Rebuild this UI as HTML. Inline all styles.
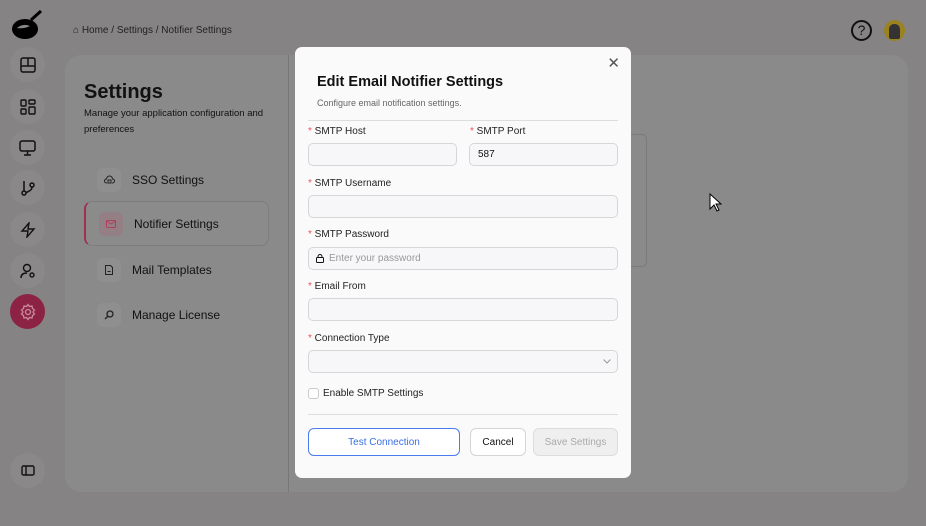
<!DOCTYPE html>
<html><head><meta charset="utf-8"><style>
*{box-sizing:border-box;margin:0;padding:0}
body{width:926px;height:526px;overflow:hidden;background:#858383;font-family:"Liberation Sans",sans-serif;position:relative;color:#111}
.abs{position:absolute}
.ic{position:absolute;left:10px;width:35px;height:35px;border-radius:50%;background:#8a8888;display:flex;align-items:center;justify-content:center}
.card{left:65px;top:55px;width:843px;height:437px;background:#898a89;border-radius:16px}
.nav{position:absolute;left:84px;width:185px;height:45px;display:flex;align-items:center;font-size:12px;color:#111}
.nav .b{width:24px;height:24px;border-radius:6px;background:#8f8f8f;margin:0 11px 0 13px;display:flex;align-items:center;justify-content:center}
.modal{left:295px;top:47px;width:336px;height:431px;background:#fafafa;border-radius:7px}
.lbl{position:absolute;font-size:10px;color:#222}
.lbl:before{content:"* ";color:#e55}
.in{position:absolute;height:23px;border:1px solid #d6d6d9;border-radius:5px;background:#f7f7f9;font-size:10px;padding-left:8px;line-height:21px}
.btn{position:absolute;height:28px;border-radius:6px;font-size:10px;display:flex;align-items:center;justify-content:center}
</style></head><body>
<svg class="abs" style="left:11px;top:9px" width="32" height="32" viewBox="0 0 32 32"><ellipse cx="14" cy="20" rx="13" ry="10" fill="#000"/><path d="M20 11 L30 2" stroke="#000" stroke-width="3"/><path d="M6 19 q6 -5 13 -2 q-6 3 -13 2z" fill="#888"/></svg>
<div class="ic" style="top:47px"><svg width="16" height="16" viewBox="0 0 16 16" fill="none" stroke="#111" stroke-width="1.5"><rect x="1" y="1" width="14" height="14" rx="2"/><path d="M1 9h14M8 1v8"/></svg></div>
<div class="ic" style="top:89px"><svg width="16" height="16" viewBox="0 0 16 16" fill="none" stroke="#111" stroke-width="1.4"><rect x="1" y="1" width="5" height="6" rx="1"/><rect x="9" y="1" width="6" height="4" rx="1"/><rect x="1" y="10" width="5" height="5" rx="1"/><rect x="9" y="8" width="6" height="7" rx="1"/></svg></div>
<div class="ic" style="top:130px"><svg width="17" height="16" viewBox="0 0 17 16" fill="none" stroke="#111" stroke-width="1.5"><rect x="1" y="1" width="15" height="10" rx="2"/><path d="M8.5 11v4M5 15h7"/></svg></div>
<div class="ic" style="top:170px"><svg width="16" height="16" viewBox="0 0 16 16" fill="none" stroke="#111" stroke-width="1.5"><circle cx="4" cy="13" r="2"/><circle cx="12" cy="5" r="2"/><path d="M4 1v10M12 7c0 4-4 4-6 6"/></svg></div>
<div class="ic" style="top:212px"><svg width="16" height="16" viewBox="0 0 16 16" fill="none" stroke="#111" stroke-width="1.4"><path d="M9 1L2 9h6l-1 6 7-8H8z"/></svg></div>
<div class="ic" style="top:253px"><svg width="16" height="16" viewBox="0 0 16 16" fill="none" stroke="#111" stroke-width="1.4"><circle cx="7" cy="5" r="3.5"/><path d="M1 15c0-4 3-5 6-5"/><circle cx="12" cy="12" r="2"/></svg></div>
<div class="ic" style="top:294px;background:#8c2244"><svg width="18" height="18" viewBox="0 0 18 18" fill="none" stroke="#c98c9c" stroke-width="1.3"><circle cx="9" cy="9" r="2.5"/><path d="M9 1.5l1.5 2 2.5-.5.5 2.5 2 1.5-1.5 2 1.5 2-2 1.5-.5 2.5-2.5-.5L9 16.5l-1.5-2-2.5.5-.5-2.5-2-1.5 1.5-2-1.5-2 2-1.5.5-2.5 2.5.5z"/></svg></div>
<div class="ic" style="top:453px"><svg width="14" height="11" viewBox="0 0 14 11" fill="none" stroke="#111" stroke-width="1.4"><rect x="1" y="1" width="12" height="9" rx="1.5"/><path d="M5 1v9"/></svg></div>
<div class="abs" style="left:73px;top:25px;font-size:10px;color:#222">⌂ Home / Settings / Notifier Settings</div>
<div class="abs" style="left:851px;top:20px;width:21px;height:21px;border:2px solid #111;border-radius:50%;font-size:14px;text-align:center;line-height:17px">?</div>
<div class="abs" style="left:884px;top:20px;width:21px;height:21px;border-radius:50%;background:#9a8220"><div style="margin:4px 0 0 5px;width:11px;height:15px;background:#333;border-radius:5px 5px 2px 2px"></div></div>
<div class="abs card"></div>
<div class="abs" style="left:288px;top:55px;width:1px;height:437px;background:#777"></div>
<div class="abs" style="left:620px;top:134px;width:27px;height:133px;border:1px solid #7a7a7a;border-left:none;border-radius:0 5px 5px 0"></div>
<div class="abs" style="left:84px;top:81px;font-size:20px;font-weight:bold;color:#111">Settings</div>
<div class="abs" style="left:84px;top:106px;font-size:9.5px;line-height:16px;width:195px;color:#111">Manage your application configuration and preferences</div>
<div class="nav" style="top:157px"><div class="b"><svg width="11" height="10" viewBox="0 0 11 10" fill="none" stroke="#222"><path d="M3 8H2.5a2 2 0 0 1 0-4 3 3 0 0 1 6 0 2 2 0 0 1 0 4H8"/><rect x="4" y="5" width="3" height="3"/></svg></div>SSO Settings</div>
<div class="nav" style="top:201px;border:1px solid #7d7d7d;border-left:2px solid #a03050;border-radius:8px;background:#8a8b8a"><div class="b" style="background:#937f84"><svg width="10" height="8" viewBox="0 0 10 8" fill="none" stroke="#b04060"><rect x=".5" y=".5" width="9" height="7" rx="1"/><path d="M.5 1l4.5 3 4.5-3"/></svg></div>Notifier Settings</div>
<div class="nav" style="top:247px"><div class="b"><svg width="8" height="10" viewBox="0 0 8 10" fill="none" stroke="#222"><path d="M.5.5h5l2 2v7h-7z M2.5 6.5h3"/></svg></div>Mail Templates</div>
<div class="nav" style="top:292px"><div class="b"><svg width="10" height="10" viewBox="0 0 10 10" fill="none" stroke="#222" stroke-width="1.3"><circle cx="6" cy="4" r="3"/><path d="M4 6L1 9"/></svg></div>Manage License</div>
<svg class="abs" style="left:709px;top:193px" width="13" height="20" viewBox="0 0 13 20"><path d="M1 1v15l4-4 3 6 2-1-3-6h5z" fill="#fff" stroke="#000"/></svg>
<div class="abs modal">
<div class="abs" style="right:11px;top:7px;font-size:15px;color:#555">✕</div>
<div class="abs" style="left:22px;top:27px;font-size:14.5px;font-weight:bold;color:#111">Edit Email Notifier Settings</div>
<div class="abs" style="left:22px;top:51px;font-size:9px;color:#666">Configure email notification settings.</div>
<div class="abs" style="left:13px;top:73px;width:310px;height:1px;background:#ddd"></div>
<div class="lbl" style="left:13px;top:79px">SMTP Host</div>
<div class="lbl" style="left:175px;top:79px">SMTP Port</div>
<div class="in" style="left:13px;top:96px;width:149px"></div>
<div class="in" style="left:174px;top:96px;width:149px">587</div>
<div class="lbl" style="left:13px;top:131px">SMTP Username</div>
<div class="in" style="left:13px;top:148px;width:310px"></div>
<div class="lbl" style="left:13px;top:182px">SMTP Password</div>
<div class="in" style="left:13px;top:200px;width:310px;color:#999;padding-left:20px"><svg style="position:absolute;left:7px;top:6px" width="8" height="9" viewBox="0 0 8 9" fill="none" stroke="#111"><rect x=".5" y="3.5" width="7" height="5" rx="1"/><path d="M2 3.5V2.5a2 2 0 0 1 4 0v1"/></svg>Enter your password</div>
<div class="lbl" style="left:13px;top:234px">Email From</div>
<div class="in" style="left:13px;top:251px;width:310px"></div>
<div class="lbl" style="left:13px;top:286px">Connection Type</div>
<div class="in" style="left:13px;top:303px;width:310px"><svg style="position:absolute;right:6px;top:8px" width="8" height="5" viewBox="0 0 8 5" fill="none" stroke="#999"><path d="M.5.5L4 4 7.5.5"/></svg></div>
<div class="abs" style="left:13px;top:341px;width:11px;height:11px;border:1px solid #ccc;border-radius:3px;background:#fff"></div>
<div class="abs" style="left:28px;top:341px;font-size:10px;color:#222">Enable SMTP Settings</div>
<div class="abs" style="left:13px;top:367px;width:310px;height:1px;background:#ddd"></div>
<div class="btn" style="left:13px;top:381px;width:152px;border:1px solid #4a7cf0;color:#3a6ee8;background:#fff">Test Connection</div>
<div class="btn" style="left:175px;top:381px;width:56px;border:1px solid #d5d5d5;background:#fff;color:#111">Cancel</div>
<div class="btn" style="left:238px;top:381px;width:85px;border:1px solid #ddd;background:#efefef;color:#aaa">Save Settings</div>
</div>
</body></html>
